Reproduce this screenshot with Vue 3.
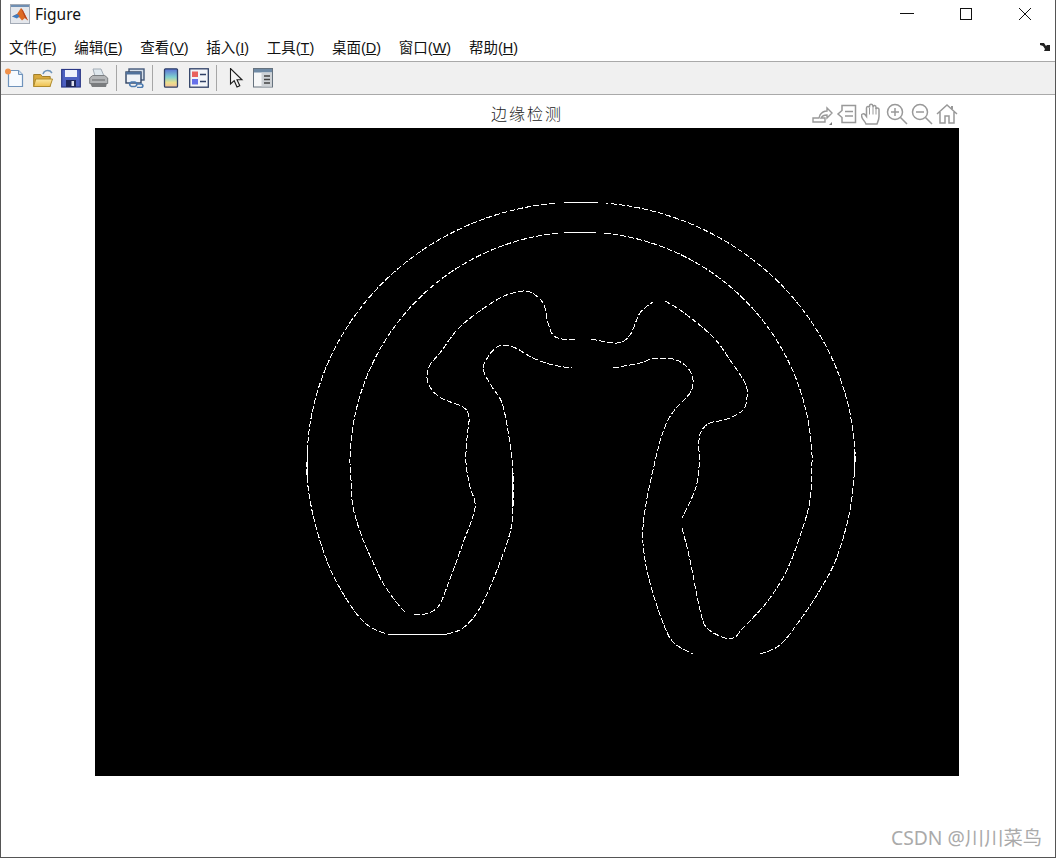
<template>
  <div class="window">
    <!-- 标题栏 -->
    <div class="title-bar">
      <svg class="app-icon" viewBox="0 0 20 20">
        <rect x="0.500" y="0.500" width="19" height="19" fill="#e4e7ec" stroke="#a4abb6" />
        <rect x="1" y="1" width="18" height="2" fill="#6f8fb3" />
        <path d="M2 12.500l5-2.500 4-6 2 2.500 5 10-3-2.500-3 2.500-2.500-3z" fill="#dd6a22" />
        <path d="M11 4l2 2.500 5 10-3-2.500z" fill="#b8431c" />
        <path d="M2 12.500l5-2.500 2.500 2-2.500 2.500z" fill="#3d7cc2" />
      </svg>
      <span class="app-name">Figure</span>
      <div class="win-buttons">
        <svg viewBox="0 0 14 14" width="14" height="14"><path d="M0 6.500h14" stroke="#111" fill="none" /></svg>
        <svg viewBox="0 0 14 14" width="14" height="14"><rect x="1.500" y="1.500" width="11" height="11" stroke="#111" fill="none" /></svg>
        <svg viewBox="0 0 14 14" width="14" height="14"><path d="M1 1l12 12M13 1L1 13" stroke="#111" fill="none" /></svg>
      </div>
    </div>

    <!-- 菜单栏 -->
    <div class="menu-bar">
      <span v-for="m in menus" :key="m.key" class="menu-item">{{ m.label }}(<u>{{ m.key }}</u>)</span>
      <svg class="dock-arrow" viewBox="0 0 10 8" width="10" height="8">
        <path d="M0 0h4l2 3 1-1 3 0v6H4l1-2-2-3-3-1z" fill="#222" />
      </svg>
    </div>

    <!-- 工具栏 -->
    <div class="tool-bar">
      <svg class="tool" viewBox="0 0 20 20">
        <path d="M3.500 2.500h10l4 4v12h-14z" fill="#f7fbff" stroke="#6f93bb" stroke-width="1.200" />
        <path d="M13.500 2.500v4h4" fill="#cfe0f0" stroke="#6f93bb" />
        <circle cx="3" cy="3.500" r="3" fill="#f0914a" />
      </svg>
      <svg class="tool" viewBox="0 0 20 20">
        <defs>
          <linearGradient id="folder" x1="0" y1="0" x2="0" y2="1">
            <stop offset="0" stop-color="#fbe9a6" />
            <stop offset="1" stop-color="#eebf4c" />
          </linearGradient>
        </defs>
        <path d="M0.700 6.500h7l1.500 2h8v10H0.700z" fill="#d9a93c" stroke="#a17f2a" />
        <path d="M0.700 18.500l2-7.500h16.800l-2.500 7.500z" fill="url(#folder)" stroke="#b08c2e" />
        <path d="M10 6c1-3 4-4 7-3l2 2" fill="none" stroke="#6d94ba" stroke-width="1.600" />
      </svg>
      <svg class="tool" viewBox="0 0 20 20">
        <rect x="0.700" y="1.500" width="18.600" height="17.500" fill="#4c5fc0" stroke="#2a3785" stroke-width="1.200" />
        <rect x="4" y="2" width="12" height="7" fill="#eef0fb" />
        <rect x="5" y="12" width="10" height="7" fill="#1f2758" />
        <rect x="10.500" y="13" width="2.500" height="5" fill="#e0e2ee" />
      </svg>
      <svg class="tool" viewBox="0 0 20 20">
        <path d="M4 1h8l3 7H6z" fill="#dfe8ee" stroke="#a3acb5" />
        <path d="M0.700 10l3-2.500h12l3 2.500v5.500H0.700z" fill="#b3b5b7" stroke="#7b7e81" />
        <path d="M1 15h17l-1 4H3z" fill="#7a7c7e" />
        <rect x="3" y="11" width="13" height="2" fill="#8c8e90" />
      </svg>
      <i class="sep"></i>
      <svg class="tool" viewBox="0 0 20 20">
        <rect x="4" y="1" width="15" height="11" fill="#d6e0ec" stroke="#44597a" stroke-width="1.400" />
        <rect x="1" y="4" width="15" height="11" fill="#eef2f7" stroke="#2f4464" stroke-width="1.400" />
        <rect x="1" y="4" width="15" height="2.500" fill="#4f719c" />
        <path d="M6.500 14h3.500a2.300 2.300 0 0 1 0 4.500H6.500a2.300 2.300 0 0 1 0-4.500zM11 16h5.500a1.800 1.800 0 0 1 0 3.500H12" fill="none" stroke="#4b7ab0" stroke-width="1.700" />
      </svg>
      <i class="sep"></i>
      <svg class="tool" viewBox="0 0 20 20">
        <defs>
          <linearGradient id="cbar" x1="0" y1="0" x2="0" y2="1">
            <stop offset="0" stop-color="#5a6fd6" />
            <stop offset="0.45" stop-color="#7fd0d0" />
            <stop offset="0.75" stop-color="#ece08c" />
            <stop offset="1" stop-color="#f4bd9c" />
          </linearGradient>
        </defs>
        <rect x="3.500" y="0.800" width="13" height="18.400" rx="1" fill="url(#cbar)" stroke="#2f4066" stroke-width="1.300" />
      </svg>
      <svg class="tool" viewBox="0 0 20 20">
        <rect x="0.700" y="0.800" width="18.600" height="18.400" fill="#f3f5f9" stroke="#2f4066" stroke-width="1.300" />
        <rect x="3" y="3.500" width="6" height="5.500" fill="#e8625f" />
        <rect x="3" y="11" width="6" height="5.500" fill="#6670ea" />
        <path d="M11 6.500h6M11 13.500h6" stroke="#2f4066" stroke-width="1.600" />
      </svg>
      <i class="sep"></i>
      <svg class="tool" viewBox="0 0 20 20">
        <path d="M5.500 0.500v15.500l3.700-3.300 2.800 6.300 2.800-1.200-2.800-6h5z" fill="#f4f4f4" stroke="#1c1c1c" stroke-width="1.100" />
      </svg>
      <svg class="tool" viewBox="0 0 20 20">
        <rect x="0.500" y="0.500" width="19" height="18.500" fill="#f6f7f8" stroke="#66727e" />
        <rect x="1" y="1" width="18" height="3.500" fill="#6f8aa5" />
        <rect x="8.500" y="4.500" width="10.500" height="14" fill="#ced2d6" />
        <path d="M11 8h6M11 11.500h6M11 15h6" stroke="#444" stroke-width="1.600" />
      </svg>
    </div>

    <!-- 图窗内容 -->
    <div class="figure-body">
      <div class="axes-title">边缘检测</div>
      <div class="axes-tools">
        <svg viewBox="0 0 22 22" class="axes-tool">
          <path d="M2 19v-4h6l1-3c2-3 5-4 7-4V5l5 5-5 5v-3c-3 0-5 1-6 3h4v4z" fill="none" stroke="#999" stroke-width="1.400" />
          <path d="M21 22h-3l3-3z" fill="#777" />
        </svg>
        <svg viewBox="0 0 22 22" class="axes-tool">
          <path d="M6 2.500h13.500v17H6v-5L2 11l4-3.500z" fill="none" stroke="#999" stroke-width="1.500" />
          <path d="M9 8.500h8M9 13h8" stroke="#999" stroke-width="1.500" />
        </svg>
        <svg viewBox="0 0 22 22" class="axes-tool">
          <path d="M5 21c-1-3-4.500-5-4.500-8.500 0-2 2.500-2 3.500-1l1.500 2V5c0-2 2.500-2 3-.5V3c0-2.500 3-2.500 3.500 0v1c.5-2 3-2 3 .5V6c.5-1.500 3-1.500 3 .5v7c0 3-1 5-2 7.500z" fill="none" stroke="#999" stroke-width="1.500" />
          <path d="M8.500 5v6.500M12 4v7.500M15 5v6.500" stroke="#999" />
        </svg>
        <svg viewBox="0 0 22 22" class="axes-tool">
          <circle cx="9" cy="9" r="7.500" fill="none" stroke="#999" stroke-width="1.500" />
          <path d="M5 9h8M9 5v8M14.500 14.500l6.500 6.500" stroke="#999" stroke-width="1.500" />
        </svg>
        <svg viewBox="0 0 22 22" class="axes-tool">
          <circle cx="9" cy="9" r="7.500" fill="none" stroke="#999" stroke-width="1.500" />
          <path d="M5 9h8M14.500 14.500l6.500 6.500" stroke="#999" stroke-width="1.500" />
        </svg>
        <svg viewBox="0 0 22 22" class="axes-tool">
          <path d="M1 11L11 2l10 9M4 9v11h5v-7h4v7h5V9" fill="none" stroke="#999" stroke-width="1.500" />
          <path d="M16 3v3" stroke="#999" stroke-width="2" />
        </svg>
      </div>
      <svg class="plot" viewBox="95 128 864 648" width="864" height="648">
        <path v-for="(d, i) in edgePaths" :key="i" :d="d" class="edge" />
        <path v-for="(d, i) in solidPaths" :key="'s' + i" :d="d" class="edge solid" />
      </svg>
      <div class="watermark">CSDN @川川菜鸟</div>
    </div>
  </div>
</template>

<script setup>
const menus = [
  { label: '文件', key: 'F' },
  { label: '编辑', key: 'E' },
  { label: '查看', key: 'V' },
  { label: '插入', key: 'I' },
  { label: '工具', key: 'T' },
  { label: '桌面', key: 'D' },
  { label: '窗口', key: 'W' },
  { label: '帮助', key: 'H' }
]

// 平滑折线
const smooth = (pts) => {
  let d = `M${pts[0][0]} ${pts[0][1]}`
  for (let i = 0; i < pts.length - 1; i++) {
    const p0 = pts[i - 1] || pts[i]
    const p1 = pts[i]
    const p2 = pts[i + 1]
    const p3 = pts[i + 2] || p2
    const c1x = p1[0] + (p2[0] - p0[0]) / 6
    const c1y = p1[1] + (p2[1] - p0[1]) / 6
    const c2x = p2[0] - (p3[0] - p1[0]) / 6
    const c2y = p2[1] - (p3[1] - p1[1]) / 6
    d += `C${c1x} ${c1y} ${c2x} ${c2y} ${p2[0]} ${p2[1]}`
  }
  return d
}

// 椭圆弧取点，角度从左到右经过顶部
const arc = (cx, cy, rx, ry, from, to, n = 24) => {
  const pts = []
  for (let i = 0; i <= n; i++) {
    const a = ((from + (to - from) * i / n) * Math.PI) / 180
    pts.push([cx + rx * Math.cos(a), cy - ry * Math.sin(a)])
  }
  return pts
}

// 外轮廓
const outerLeft = [
  ...arc(581, 463, 274, 261, 95.500, 180),
  [307, 477], [310, 500], [315, 523], [323, 550], [333, 575], [347, 600], [360, 618], [372, 628], [387, 634]
]
const outerLeg = [
  [447, 634], [463, 628], [480, 608], [497, 570], [510, 533], [513, 507], [513, 473], [509, 437],
  [502, 403], [492, 387], [484, 372], [485, 362], [497, 347], [513, 347], [533, 358], [553, 365], [572, 368]
]
const outerRight = [
  [613, 368], [640, 363], [652, 359], [673, 359], [687, 367], [693, 380], [690, 393], [677, 407], [668, 420],
  [661, 438], [657, 453], [648, 493], [643, 527], [644, 553], [650, 583], [662, 620], [673, 642], [693, 654]
]
const outerEnd = [
  [760, 654], [780, 645], [800, 620], [820, 590], [837, 557], [850, 510], [855, 463],
  ...arc(581, 463, 274, 261, 0, 84.700).slice(1)
]

// 内轮廓
const innerLeft = [
  ...arc(581, 463, 231, 231, 95.700, 180),
  [351, 480], [353, 507], [362, 537], [372, 560], [383, 583], [397, 603], [406, 613]
]
const innerLeg = [
  [414, 615], [425, 614], [438, 607], [447, 587], [463, 543], [475, 508], [470, 487], [466, 463], [467, 438],
  [469, 417], [463, 407], [443, 399], [432, 390], [427, 378], [430, 365], [440, 353], [457, 330], [477, 313],
  [500, 298], [517, 292], [530, 292], [543, 303], [548, 323], [553, 335], [562, 339], [577, 339]
]
const innerMid = [[591, 339], [617, 343], [630, 335], [640, 313], [653, 302]]
const innerRight = [
  [665, 301], [683, 312], [713, 337], [730, 360], [745, 383], [747, 397], [743, 410], [727, 419], [710, 423],
  [702, 430], [699, 440], [699, 467], [695, 490], [682, 518]
]
const innerEnd = [
  [682, 528], [690, 560], [700, 610], [707, 628], [725, 638], [735, 637], [743, 628], [767, 602], [787, 570],
  [802, 530], [810, 500], [812, 463],
  ...arc(581, 463, 231, 231, 0, 84.500).slice(1)
]

const edgePaths = [
  outerLeft, outerLeg, outerRight, outerEnd,
  innerLeft, innerLeg, innerMid, innerRight, innerEnd
].map(smooth)

// 顶部、底部和两侧的实线段
const solidPaths = [
  'M564 202.500H598', 'M564 232.500H596', 'M388 634.500H447',
  'M307.500 450V477', 'M854.500 449V477', 'M512.500 472V507'
]
</script>

<style>
html,
body {
  margin: 0;
  background: #fff;
}
</style>

<style scoped>
.window {
  width: 1056px;
  height: 858px;
  box-sizing: border-box;
  display: flex;
  flex-direction: column;
  background: #fff;
  border: 1px solid #555;
  border-top: none;
  font-family: "Liberation Sans", "Noto Sans CJK SC", sans-serif;
  color: #111;
  overflow: hidden;
}

.title-bar {
  height: 33px;
  box-sizing: border-box;
  display: flex;
  align-items: center;
  padding: 0 0 5px 9px;
  flex: none;
}

.app-icon {
  width: 20px;
  height: 20px;
  margin-right: 5px;
}

.app-name {
  font-family: "Noto Sans", sans-serif;
  font-size: 15.500px;
}

.win-buttons {
  margin-left: auto;
  display: flex;
  gap: 45px;
  padding-right: 23px;
}

.menu-bar {
  height: 28px;
  box-sizing: border-box;
  display: flex;
  align-items: center;
  gap: 17.700px;
  padding: 0 0 2px 8px;
  font-size: 14.500px;
  flex: none;
  position: relative;
}

.menu-item {
  white-space: nowrap;
}

.dock-arrow {
  position: absolute;
  right: 5px;
  top: 10px;
}

.tool-bar {
  height: 34px;
  box-sizing: border-box;
  flex: none;
  display: flex;
  align-items: center;
  gap: 8px;
  padding-left: 4px;
  background: #f0f0f0;
  border-top: 1px solid #a9a9a9;
  border-bottom: 1px solid #a9a9a9;
}

.tool {
  width: 20px;
  height: 20px;
  flex: none;
}

.sep {
  width: 1px;
  height: 26px;
  background: #a6a6a6;
  margin-left: -1px;
}

.figure-body {
  flex: 1;
  position: relative;
  padding: 8px 0 0 94px;
}

.axes-title {
  width: 864px;
  height: 25px;
  line-height: 20px;
  text-align: center;
  font-family: "Noto Sans CJK SC", sans-serif;
  font-size: 16px;
  font-weight: 300;
  letter-spacing: 2px;
  color: #222;
}

.axes-tools {
  position: absolute;
  top: 8px;
  left: 810px;
  display: flex;
  gap: 3px;
}

.axes-tool {
  width: 22px;
  height: 22px;
}

.plot {
  display: block;
  background: #000;
}

.edge {
  fill: none;
  stroke: #fff;
  stroke-width: 1;
  stroke-dasharray: 6 2;
  shape-rendering: crispEdges;
}

.edge.solid {
  stroke-dasharray: none;
}

.watermark {
  position: absolute;
  right: 13px;
  bottom: 6px;
  font-family: "Noto Sans", "Noto Sans CJK SC", sans-serif;
  font-size: 19.300px;
  color: #aaa;
}
</style>
